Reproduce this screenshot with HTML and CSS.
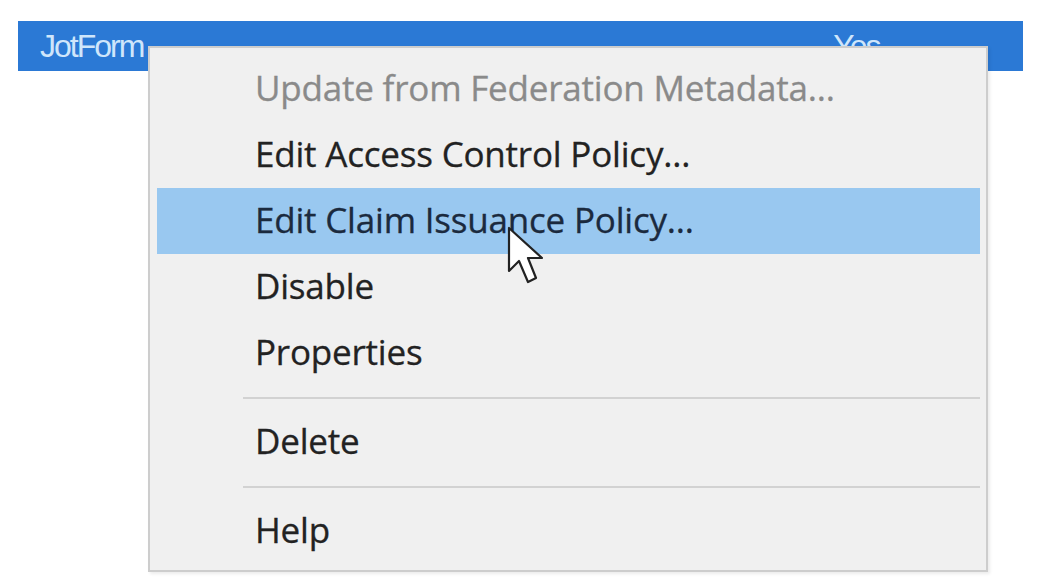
FILE: index.html
```html
<!DOCTYPE html>
<html>
<head>
<meta charset="utf-8">
<link rel="stylesheet" href="styles.css">
</head>
<body>
<div class="stage">
  <div class="row-selected">
    <span class="cell-name">JotForm</span>
    <span class="cell-yes">Yes</span>
  </div>
  <div class="menu">
    <div class="item disabled">Update from Federation Metadata...</div>
    <div class="item">Edit Access Control Policy...</div>
    <div class="item hover">Edit Claim Issuance Policy...</div>
    <div class="item">Disable</div>
    <div class="item">Properties</div>
    <div class="sep"></div>
    <div class="item">Delete</div>
    <div class="sep"></div>
    <div class="item">Help</div>
  </div>
  <svg class="cursor" width="44" height="64" viewBox="0 0 44 64">
    <path d="M3 2 L3 45 L13 35 L22 56 L30 52 L22 32 L36 32 Z" fill="#ffffff" stroke="#222" stroke-width="2.2" stroke-linejoin="round"/>
  </svg>
</div>
</body>
</html>
```

FILE: styles.css
```css
html, body {
  margin: 0;
  padding: 0;
  background: #ffffff;
}
.stage {
  position: relative;
  width: 1054px;
  height: 582px;
  overflow: hidden;
  font-family: "Open Sans", "Noto Sans", sans-serif;
}
.row-selected {
  margin: 21px 0 0 18px;
  width: 1005px;
  height: 50px;
  background: #2b79d5;
  display: flex;
  align-items: center;
  color: #cfe6fb;
  font-family: "Liberation Sans", sans-serif;
  font-size: 32px;
  letter-spacing: -2px;
}
.cell-name {
  margin-left: 22px;
}
.cell-yes {
  margin-left: 690px;
}
.menu {
  position: absolute;
  left: 148px;
  top: 46px;
  width: 823px;
  background: #f0f0f0;
  border: 2px solid #cdcdcd;
  padding: 8px 6px 6px 7px;
  box-shadow: 2px 2px 3px rgba(0,0,0,0.08);
}
.item {
  height: 66px;
  box-sizing: border-box;
  padding-bottom: 4px;
  display: flex;
  align-items: center;
  padding-left: 98px;
  font-size: 35px;
  letter-spacing: -0.2px;
  color: #222222;
  -webkit-text-stroke: 0.3px currentColor;
}
.item.disabled {
  color: #8a8a8a;
}
.item.hover {
  background: #99c8f0;
  color: #1b2a3e;
}
.sep {
  height: 23px;
  display: flex;
  align-items: center;
  margin-left: 86px;
}
.sep::before {
  content: "";
  flex: 1;
  height: 2px;
  background: #d2d2d2;
}
.cursor {
  position: absolute;
  left: 506px;
  top: 226px;
}
```
